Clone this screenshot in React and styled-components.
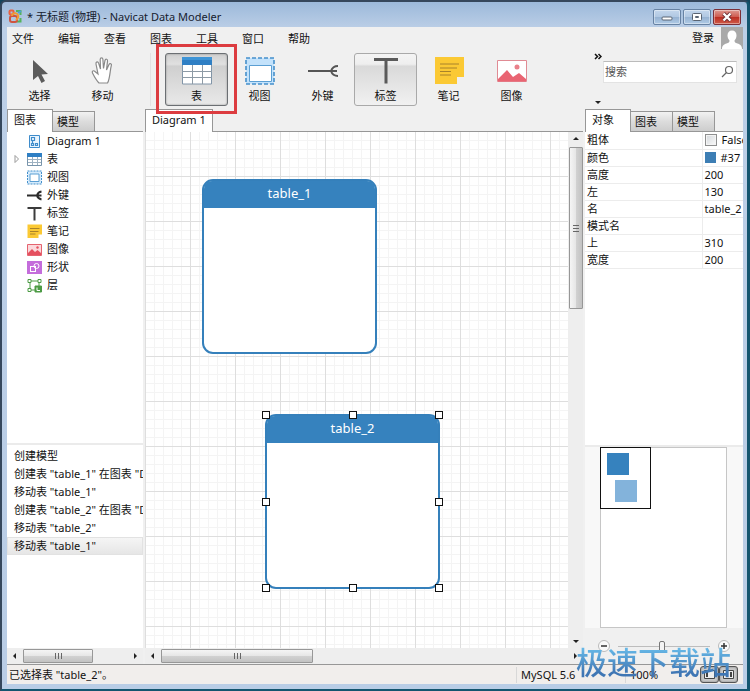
import React, { useState } from 'react';
import styled, { createGlobalStyle, css } from 'styled-components';

const GlobalStyle = createGlobalStyle`
  * {
    box-sizing: border-box;
  }

  body {
    margin: 0;
    background: #12455e;
  }

  body, button, input, table {
    font-family: 'Noto Sans', 'Noto Sans CJK SC', sans-serif;
    font-size: 11px;
    line-height: 16px;
    color: #111;
  }

  button {
    padding: 0;
    border: 0;
    background: none;
  }
`;

const Frame = styled.div`
  display: flex;
  flex-direction: column;
  min-height: 100vh;
  padding: 0 4px 5px 5px;
  border: 2px solid #35475c;
  border-right: 3px solid #14556f;
  border-bottom-color: #14556f;
  border-radius: 6px 6px 0 0;
  background: linear-gradient(#9cb9da, #bccfe7 27px, #b9cde6);
`;

const TitleBar = styled.header`
  display: flex;
  align-items: center;
  gap: 4px;
  height: 25px;
  padding: 4px 2px 0 1px;
`;

const Title = styled.h1`
  flex: 1;
  margin: 0;
  font-size: 11px;
  font-weight: 400;
  color: #16202e;
`;

const WindowButtons = styled.div`
  display: flex;
  gap: 2px;
`;

const WindowButton = styled.button`
  display: flex;
  align-items: center;
  justify-content: center;
  width: 28px;
  height: 16px;
  border: 1px solid ${({ $danger }) => ($danger ? '#7c2f38' : '#6782a3')};
  border-radius: 2px;
  box-shadow: inset 0 0 0 1px rgba(255, 255, 255, 0.4);
  background: ${({ $danger }) =>
    $danger
      ? 'linear-gradient(#dd9a92, #cf5c50 48%, #bb2c20 50%, #cf5a48)'
      : 'linear-gradient(#c3d6ec, #b1c8e2 48%, #95b1d1 50%, #b0cbe6)'};
`;

const Client = styled.div`
  flex: 1;
  display: flex;
  flex-direction: column;
  background: #f0f0f0;
`;

const MenuBar = styled.nav`
  display: flex;
  align-items: flex-start;
  height: 25px;
  padding-left: 5px;
`;

const MenuItem = styled.button`
  width: 46px;
  height: 24px;
  text-align: left;
`;

const Login = styled.button`
  display: flex;
  align-items: center;
  gap: 7px;
  margin-left: auto;
`;

const Toolbar = styled.div`
  display: flex;
  height: 57px;
  padding: 1px 6px 3px 1px;
`;

const ToolSeparator = styled.div`
  width: 1px;
  margin: 0 14px 0 16px;
  background: #e2e2e2;
`;

const ToolButton = styled.button`
  position: relative;
  display: flex;
  flex-direction: column;
  align-items: center;
  justify-content: space-between;
  width: 63px;
  height: 53px;
  padding: 2px 0 1px;
  border: 1px solid transparent;
  border-radius: 3px;

  ${({ $state }) =>
    $state === 'hover' &&
    css`
      border-color: #a9a9a9;
      background: linear-gradient(#f4f4f4, #eee 20%, #d9d9d9 24%, #f1f1f1);
    `}

  ${({ $state }) =>
    $state === 'pressed' &&
    css`
      border-color: #6b6f73;
      background: linear-gradient(#d0d0d0, #e0e0e0 20%, #cfcfcf 24%, #e9e9e9);
      box-shadow: inset 0 0 2px #888;
    `}
`;

const Highlight = styled.span`
  position: absolute;
  inset: -10px -10px -9px;
  border: 3px solid #dc3c40;
  pointer-events: none;
`;

const Overflow = styled.div`
  display: flex;
  flex-direction: column;
  justify-content: space-between;
  align-items: center;
  width: 10px;
  margin-left: auto;
`;

const SearchBox = styled.label`
  display: flex;
  align-items: center;
  width: 134px;
  height: 22px;
  margin-top: 8px;
  padding: 0 1px;
  border: 1px solid #e3e3e3;
  border-top-color: #bbb;
  background: #fff;
`;

const SearchInput = styled.input`
  flex: 1;
  min-width: 0;
  padding: 0;
  border: 0;
  outline: 0;
  background: none;

  &::placeholder {
    color: #555;
    opacity: 1;
  }
`;

const Workspace = styled.main`
  flex: 1;
  display: flex;
  gap: 2px;
`;

const Column = styled.section`
  display: flex;
  flex-direction: column;
  min-width: 0;
  flex: ${({ $width }) => ($width ? `0 0 ${$width}px` : '1')};
`;

const TabRow = styled.div`
  display: flex;
  align-items: flex-end;
  height: 23px;
  border-bottom: 1px solid #979797;
`;

const Tab = styled.button`
  min-width: 42px;
  height: 20px;
  padding: 0 4px;
  border: 1px solid #979797;
  border-left-width: 0;
  border-bottom: 0;
  background: linear-gradient(#f2f2f2, #dcdcdc 50%, #cdcdcd);
  text-align: left;

  ${({ $active }) =>
    $active &&
    css`
      min-width: 46px;
      height: 23px;
      margin-bottom: -1px;
      padding: 0 6px 2px;
      border-left-width: 1px;
      background: #fff;
    `}
`;

const Tree = styled.ul`
  flex: 1;
  margin: 0;
  padding: 0;
  list-style: none;
  background: #fff;
`;

const TreeItem = styled.li`
  display: grid;
  grid-template-columns: 11px 15px 1fr;
  align-items: center;
  column-gap: 5px;
  height: 18px;
  padding-left: 4px;
  white-space: nowrap;
`;

const History = styled.ol`
  height: 205px;
  margin: 0;
  padding: 2px 0 0;
  border-top: 2px solid #ebebeb;
  list-style: none;
  background: #fff;
`;

const HistoryItem = styled.li`
  height: 18px;
  padding: 0 0 0 7px;
  overflow: hidden;
  white-space: nowrap;
  line-height: 18px;
  background: ${({ $selected }) =>
    $selected ? 'linear-gradient(#f6f6f6, #e5e5e5)' : 'none'};
  box-shadow: ${({ $selected }) => ($selected ? 'inset 0 0 0 1px #e2e2e2' : 'none')};
`;

const ScrollTrack = styled.div`
  display: flex;
  flex-direction: ${({ $vertical }) => ($vertical ? 'column' : 'row')};
  align-items: center;
  justify-content: space-between;
  width: ${({ $vertical }) => ($vertical ? '15px' : 'auto')};
  height: ${({ $vertical }) => ($vertical ? 'auto' : '16px')};
  padding: ${({ $vertical }) => ($vertical ? '3px 0' : '1px 4px')};
  background: #eee;
`;

const ScrollThumb = styled.div`
  display: flex;
  align-items: center;
  justify-content: center;
  width: ${({ $vertical, $size }) => ($vertical ? '14px' : `${$size}px`)};
  height: ${({ $vertical, $size }) => ($vertical ? `${$size}px` : '14px')};
  margin: ${({ $vertical }) => ($vertical ? '4px 0 auto' : '0 auto 0 4px')};
  border: 1px solid #979797;
  border-radius: 1px;
  background: linear-gradient(
    ${({ $vertical }) => ($vertical ? '90deg' : '180deg')},
    #f5f5f5,
    #e6e6e6 48%,
    #d2d2d2 50%,
    #c2c2c2
  );
`;

const Canvas = styled.div`
  position: relative;
  flex: 1;
  overflow: hidden;
  background-color: #fff;
  background-image:
    linear-gradient(90deg, #dedede 1px, transparent 1px),
    linear-gradient(#dedede 1px, transparent 1px),
    linear-gradient(90deg, #f4f4f4 1px, transparent 1px),
    linear-gradient(#f4f4f4 1px, transparent 1px);
  background-size: 45px 45px, 45px 45px, 9px 9px, 9px 9px;
  background-position: 0 -1px;
`;

const CanvasRow = styled.div`
  flex: 1;
  display: flex;
`;

const Entity = styled.div`
  position: absolute;
  width: 175px;
  height: 175px;
  border: 2px solid #3580bb;
  border-radius: 11px;
  background: #fff;
`;

const EntityHeader = styled.div`
  height: 27px;
  border-radius: 8px 8px 0 0;
  background: #3682be;
  color: #fff;
  font-size: 13px;
  line-height: 25px;
  text-align: center;
`;

const Selection = styled.div`
  position: absolute;
  inset: -1px;
`;

const Handle = styled.span`
  position: absolute;
  width: 8px;
  height: 8px;
  margin: -4px;
  border: 1px solid #111;
  background: #fff;
`;

const PropertyPane = styled.div`
  flex: 1;
  background: #fff;
`;

const Properties = styled.table`
  width: 100%;
  table-layout: fixed;
  border-collapse: collapse;

  th, td {
    height: 17px;
    padding: 0 0 0 2px;
    overflow: hidden;
    border-bottom: 1px solid #ececec;
    font-weight: 400;
    text-align: left;
    white-space: nowrap;
  }

  td {
    border-left: 1px solid #ececec;
  }
`;

const PropertyValue = styled.div`
  display: flex;
  align-items: center;
  gap: 5px;
`;

const CheckBox = styled.input`
  flex: none;
  appearance: none;
  width: 12px;
  height: 12px;
  margin: 0;
  border: 1px solid #8e8f8f;
  background: linear-gradient(135deg, #d4d8dc, #fafafa);
  box-shadow: inset 0 0 0 1px #f4f4f4;
`;

const Swatch = styled.span`
  width: 11px;
  height: 11px;
  background: #3d7eb4;
`;

const Overview = styled.div`
  height: 183px;
  padding: 0 16px 0 15px;
  border-top: 2px solid #ebebeb;
  background: #f8f8f8;
`;

const OverviewPage = styled.div`
  position: relative;
  height: 181px;
  border: 1px solid #c6c6c6;
  background: #fff;
`;

const Viewport = styled.div`
  position: absolute;
  top: -1px;
  left: -1px;
  width: 51px;
  height: 62px;
  border: 1px solid #111;
`;

const MiniEntity = styled.span`
  position: absolute;
  width: 22px;
  height: 22px;
  background: ${({ $faded }) => ($faded ? '#83b3db' : '#3682be')};
`;

const ZoomBar = styled.div`
  flex: none;
  display: flex;
  align-items: center;
  gap: 8px;
  height: 36px;
  padding: 0 13px;
`;

const ZoomButton = styled.button`
  display: flex;
  width: 12px;
  height: 12px;
`;

const ZoomSlider = styled.input`
  flex: 1;
  min-width: 0;
  height: 12px;
  margin: 0;
  appearance: none;
  background: linear-gradient(#bdbdbd, #bdbdbd) center / 100% 1px no-repeat;

  &::-webkit-slider-thumb {
    appearance: none;
    width: 6px;
    height: 11px;
    border: 1px solid #777;
    border-radius: 2px;
    background: #f4f4f4;
  }
`;

const StatusBar = styled.footer`
  position: relative;
  display: flex;
  align-items: center;
  height: 20px;
  padding-right: 5px;
  border-top: 1px solid #979797;
  background: #f1eeec;
`;

const StatusText = styled.span`
  flex: ${({ $width }) => ($width ? `0 0 ${$width}px` : '1')};
  padding-left: ${({ $width }) => ($width ? '4px' : '2px')};
  border-left: ${({ $width }) => ($width ? '1px solid #d8d8d8' : '0')};
  white-space: nowrap;
`;

const PaneToggle = styled.button`
  display: flex;
  align-items: center;
  justify-content: center;
  width: 19px;
  height: 17px;
  border: 1px solid #555;
  border-radius: 3px;
  background: #c9c9c9;
  box-shadow: inset 0 0 2px #777;
`;

const Watermark = styled.span`
  position: absolute;
  right: 12px;
  bottom: 3px;
  background: linear-gradient(#66b7e6 20%, #3f76b4 80%);
  background-clip: text;
  color: transparent;
  font-family: 'Noto Sans CJK SC', sans-serif;
  font-size: 31px;
  font-weight: 500;
  line-height: 40px;
  white-space: nowrap;
  pointer-events: none;
`;

const AppIcon = () => (
  <svg width="15" height="15" viewBox="0 0 15 15" fill="none" strokeWidth="2">
    <rect x="1.5" y="1.5" width="4" height="4" rx="1" stroke="#e9603f" />
    <path d="M8 2h4.5v4M12.5 9v3.5h-4" stroke="#54b35d" />
    <rect x="2" y="7" width="7" height="6" rx="2" stroke="#cf5440" />
    <path d="M4 7c0-3 5-4 6-1s-1 4-2 5" stroke="#ef9b35" />
    <path d="M10 4l3-2" stroke="#4b9ddb" />
  </svg>
);

const Arrow = ({ dir }) => {
  const paths = {
    left: 'M5 1v6L2 4z',
    right: 'M3 1v6l3-3z',
    up: 'M1 5h6L4 2z',
    down: 'M1 3h6L4 6z',
  };
  return (
    <svg width="8" height="8" viewBox="0 0 8 8">
      <path d={paths[dir]} fill="#222" />
    </svg>
  );
};

const Grip = ({ vertical }) => (
  <svg width="8" height="8" viewBox="0 0 8 8" stroke="#666">
    <path d={vertical ? 'M1 1.5h6M1 4.5h6M1 7.5h6' : 'M1.5 1v6M4.5 1v6M7.5 1v6'} />
  </svg>
);

const TableIcon = ({ size }) =>
  size < 20 ? (
    <svg width={size} height={size} viewBox="0 0 15 15">
      <path d="M.5 1.500h14v12H.5z" fill="#fff" stroke="#7894ab" />
      <path d="M0 1h15v4H0z" fill="#2f7fc4" />
      <path d="M5.500 5v8M10.500 5v8M1 7.500h13M1 10.500h13" stroke="#9db1c1" />
    </svg>
  ) : (
    <svg width={size} height={size} viewBox="0 0 30 30">
      <path d="M.5 2h29v26H.5z" fill="#fff" stroke="#8195a8" />
      <path d="M0 1h30v8H0z" fill="#2f7fc4" />
      <path d="M0 1h30v3H0z" fill="#3e94d6" />
      <path d="M10.500 9v19M20.500 9v19M0 15.500h30M0 21.500h30" stroke="#8d9aa5" />
    </svg>
  );

const ViewIcon = ({ size }) =>
  size < 20 ? (
    <svg width={size} height={size} viewBox="0 0 15 15">
      <path d="M.5 1h14v13H.5z" fill="#d5ebfc" stroke="#4590cb" strokeDasharray="2 1" />
      <path d="M3 4h9v7.500H3z" fill="#fff" stroke="#5b9fd3" />
    </svg>
  ) : (
    <svg width={size} height={size} viewBox="0 0 30 30">
      <path d="M1 2h28v26H1z" fill="#c3e2fb" stroke="#4590cb" strokeWidth="1.600" strokeDasharray="4 2" />
      <path d="M4.500 9.500h22v16h-22z" fill="#fff" stroke="#5b9fd3" />
    </svg>
  );

const KeyIcon = ({ size }) => (
  <svg
    width={size}
    height={size}
    viewBox="0 0 30 30"
    fill="none"
    stroke={size < 20 ? '#2c2c2c' : '#555'}
    strokeWidth={size < 20 ? 4 : 2}
  >
    <path d={size < 20 ? 'M0 15h29M29 7c-5 1-8 4-9 8 1 4 4 7 9 8' : 'M0 15h29M30 10c-4 0-6 2-7 5 1 3 3 5 7 5'} />
  </svg>
);

const LabelIcon = ({ size }) => (
  <svg
    width={size}
    height={size}
    viewBox="0 0 30 30"
    fill="none"
    stroke={size < 20 ? '#3c3c3c' : '#5a5a5a'}
    strokeWidth={size < 20 ? 4 : 3}
  >
    <path d={size < 20 ? 'M1 4h28M15 4v25' : 'M3 3.500h24M15 3.500v24'} />
  </svg>
);

const NoteIcon = ({ size }) => (
  <svg width={size} height={size} viewBox="0 0 30 30">
    <path d="M1 1h29v20h-7v7H1z" fill="#fbc934" />
    <path
      d={size < 20 ? 'M6 9h19M6 15h17M6 20h11' : 'M6 8h19M6 12h17M6 15.500h11M6 19h11'}
      stroke="#a8822a"
      strokeWidth={size < 20 ? 2 : 1}
    />
  </svg>
);

const ImageIcon = ({ size }) =>
  size < 20 ? (
    <svg width={size} height={size} viewBox="0 0 15 15">
      <path d="M.5 2.500h14v11H.5z" fill="#fbd9dc" stroke="#e5636f" />
      <path d="M1 11l4-4 3 3 2.500-2L14 11v2H1z" fill="#e5505f" />
      <circle cx="10.500" cy="5.500" r="1.200" fill="#e5505f" />
    </svg>
  ) : (
    <svg width={size} height={size} viewBox="0 0 30 30">
      <path d="M.5 4.500h29v21H.5z" fill="#fff" stroke="#e08b94" />
      <path d="M1 23l9-9 6 7 6-4 7 6v2.500H1z" fill="#e96472" />
      <circle cx="20" cy="11" r="2.500" fill="#e9808a" />
    </svg>
  );

const PointerIcon = () => (
  <svg width="30" height="30" viewBox="0 0 30 30">
    <path d="M8 4v20l5-4 3.500 7 3.500-2-3.500-6.500 6.500-.5z" fill="#5c5c5c" />
  </svg>
);

const HandIcon = () => (
  <svg width="30" height="30" viewBox="0 0 30 30" fill="#fff" stroke="#8a8a8a" strokeWidth="1.200">
    <path d="M11 27C8 24 6 20 4.500 17c-1-2 1-3 2.500-1.500L10 18 8 8c-.4-2.500 2-3 2.600-.8L12.500 13l-.3-9.500c0-2.200 2.600-2.200 2.700 0l.6 9 1.500-8c.5-2 2.800-1.500 2.500.6L18.500 14l2.500-5.500c1-1.800 3-.6 2.300 1.200C22 14 22 23 19.500 27z" />
  </svg>
);

const DiagramIcon = ({ size }) => (
  <svg width={size} height={size} viewBox="0 0 15 15" fill="none" stroke="#3f8ccb">
    <path d="M2.500 1.500h10v12h-10z" fill="#eaf5fe" />
    <path d="M4.500 3.500h3v3h-3zM4.500 9.500h2v2h-2zM8.500 9.500h2v2h-2zM5.500 6.500v3" strokeWidth="1.200" />
  </svg>
);

const ShapeIcon = ({ size }) => (
  <svg width={size} height={size} viewBox="0 0 15 15" fill="none" stroke="#fff">
    <path d="M0 1h15v13H0z" fill="#c46ddb" stroke="none" />
    <rect x="3.500" y="6.500" width="5" height="5" />
    <circle cx="9.500" cy="6" r="2.500" />
  </svg>
);

const LayerIcon = ({ size }) => (
  <svg width={size} height={size} viewBox="0 0 15 15" fill="#fff" stroke="#4c9b45">
    <path d="M3 3h9v9H3z" fill="none" />
    <path d="M1 1.500h3v3H1zM11 1.500h3v3h-3zM1 10.500h3v3H1z" />
    <path d="M8 8h6.500v6H8z" fill="#4c9b45" />
    <path d="M10 9.500v3h3" fill="none" stroke="#fff" />
  </svg>
);

const Avatar = () => (
  <svg width="22" height="22" viewBox="0 0 22 22">
    <path d="M0 0h22v22H0z" fill="#a9a9a9" />
    <path d="M11 3.500c-3 0-4.500 2-4.500 5 0 2 1 4 2 5 0 2-.8 2.300-3 3C3 17.300 1 18.500 1 22h20c0-3.500-2-4.700-4.500-5.500-2.200-.7-3-1-3-3 1-1 2-3 2-5 0-3-1.500-5-4.500-5z" fill="#fff" />
  </svg>
);

const MENUS = ['文件', '编辑', '查看', '图表', '工具', '窗口', '帮助'];

const MODES = [
  { label: '选择', Icon: PointerIcon },
  { label: '移动', Icon: HandIcon },
];

const TOOLS = [
  { label: '表', Icon: TableIcon, state: 'pressed' },
  { label: '视图', Icon: ViewIcon },
  { label: '外键', Icon: KeyIcon },
  { label: '标签', Icon: LabelIcon, state: 'hover' },
  { label: '笔记', Icon: NoteIcon },
  { label: '图像', Icon: ImageIcon },
];

const TREE = [
  { label: 'Diagram 1', Icon: DiagramIcon },
  { label: '表', Icon: TableIcon, expandable: true },
  { label: '视图', Icon: ViewIcon },
  { label: '外键', Icon: KeyIcon },
  { label: '标签', Icon: LabelIcon },
  { label: '笔记', Icon: NoteIcon },
  { label: '图像', Icon: ImageIcon },
  { label: '形状', Icon: ShapeIcon },
  { label: '层', Icon: LayerIcon },
];

const HISTORY = [
  '创建模型',
  '创建表 "table_1" 在图表 "Diagram 1"',
  '移动表 "table_1"',
  '创建表 "table_2" 在图表 "Diagram 1"',
  '移动表 "table_2"',
  '移动表 "table_1"',
];

const ENTITIES = [
  { name: 'table_1', left: 57, top: 47 },
  { name: 'table_2', left: 120, top: 282, selected: true },
];

const HANDLES = [
  [0, 0], [50, 0], [100, 0], [0, 50], [100, 50], [0, 100], [50, 100], [100, 100],
];

const PROPERTIES = [
  ['高度', '200'],
  ['左', '130'],
  ['名', 'table_2'],
  ['模式名', ''],
  ['上', '310'],
  ['宽度', '200'],
];

const Tabs = ({ items }) => (
  <TabRow role="tablist">
    {items.map((item, i) => (
      <Tab key={item} role="tab" aria-selected={i === 0} $active={i === 0}>
        {item}
      </Tab>
    ))}
  </TabRow>
);

const Scrollbar = ({ vertical, size }) => (
  <ScrollTrack $vertical={vertical}>
    <Arrow dir={vertical ? 'up' : 'left'} />
    <ScrollThumb $vertical={vertical} $size={size}>
      <Grip vertical={vertical} />
    </ScrollThumb>
    <Arrow dir={vertical ? 'down' : 'right'} />
  </ScrollTrack>
);

const App = () => {
  const [zoom, setZoom] = useState(48);
  const [bold, setBold] = useState(false);

  return (
    <>
      <GlobalStyle />
      <Frame>
        <TitleBar>
          <AppIcon />
          <Title>* 无标题 (物理) - Navicat Data Modeler</Title>
          <WindowButtons>
            <WindowButton aria-label="最小化">
              <svg width="12" height="8" viewBox="0 0 12 8">
                <rect x="1" y="4" width="10" height="3" rx="1" fill="#fff" stroke="#5a6472" />
              </svg>
            </WindowButton>
            <WindowButton aria-label="最大化">
              <svg width="12" height="10" viewBox="0 0 12 10" fill="#fff" stroke="#5a6472">
                <rect x="1.500" y="1.500" width="9" height="7" rx="1" />
                <path d="M4.500 4.500h3v1h-3z" />
              </svg>
            </WindowButton>
            <WindowButton aria-label="关闭" $danger>
              <svg width="12" height="10" viewBox="0 0 12 10">
                <path d="M2.500 1.500l7 7M9.500 1.500l-7 7" stroke="#6b3035" strokeWidth="4" />
                <path d="M2.500 1.500l7 7M9.500 1.500l-7 7" stroke="#fff" strokeWidth="2.400" />
              </svg>
            </WindowButton>
          </WindowButtons>
        </TitleBar>
        <Client>
          <MenuBar>
            {MENUS.map((menu) => (
              <MenuItem key={menu}>{menu}</MenuItem>
            ))}
            <Login>
              登录
              <Avatar />
            </Login>
          </MenuBar>
          <Toolbar>
            {MODES.map(({ label, Icon }) => (
              <ToolButton key={label}>
                <Icon />
                {label}
              </ToolButton>
            ))}
            <ToolSeparator />
            {TOOLS.map(({ label, Icon, state }) => (
              <ToolButton key={label} $state={state}>
                <Icon size={30} />
                {label}
                {state === 'pressed' && <Highlight />}
              </ToolButton>
            ))}
            <Overflow>
              <svg width="8" height="8" viewBox="0 0 8 8" fill="none" stroke="#111" strokeWidth="1.500">
                <path d="M1 1l2.500 2.500L1 6M4.500 1L7 3.500 4.500 6" />
              </svg>
              <Arrow dir="down" />
            </Overflow>
            <SearchBox>
              <SearchInput type="text" placeholder="搜索" aria-label="搜索" />
              <svg width="14" height="14" viewBox="0 0 14 14" fill="none" stroke="#666" strokeWidth="1.200">
                <circle cx="8" cy="5" r="3.500" />
                <path d="M5.500 7.500L1 12" />
              </svg>
            </SearchBox>
          </Toolbar>
          <Workspace>
            <Column $width={136}>
              <Tabs items={['图表', '模型']} />
              <Tree>
                {TREE.map(({ label, Icon, expandable }) => (
                  <TreeItem key={label}>
                    <svg width="11" height="10" viewBox="0 0 11 10" fill="none" stroke="#999">
                      {expandable && <path d="M4 1.500l3.500 3.500L4 8.500z" />}
                    </svg>
                    <Icon size={15} />
                    <span>{label}</span>
                  </TreeItem>
                ))}
              </Tree>
              <History>
                {HISTORY.map((entry, i) => (
                  <HistoryItem key={i} $selected={i === HISTORY.length - 1}>
                    {entry}
                  </HistoryItem>
                ))}
              </History>
              <Scrollbar size={70} />
            </Column>
            <Column>
              <Tabs items={['Diagram 1']} />
              <CanvasRow>
                <Canvas>
                  {ENTITIES.map(({ name, left, top, selected }) => (
                    <Entity key={name} style={{ left, top }}>
                      <EntityHeader>{name}</EntityHeader>
                      {selected && (
                        <Selection>
                          {HANDLES.map(([x, y]) => (
                            <Handle key={`${x}-${y}`} style={{ left: `${x}%`, top: `${y}%` }} />
                          ))}
                        </Selection>
                      )}
                    </Entity>
                  ))}
                </Canvas>
                <Scrollbar vertical size={162} />
              </CanvasRow>
              <Scrollbar size={152} />
            </Column>
            <Column $width={158}>
              <Tabs items={['对象', '图表', '模型']} />
              <PropertyPane>
                <Properties>
                  <colgroup>
                    <col width="117" />
                    <col />
                  </colgroup>
                  <tbody>
                    <tr>
                      <th scope="row"><label htmlFor="bold">粗体</label></th>
                      <td>
                        <PropertyValue>
                          <CheckBox
                            id="bold"
                            type="checkbox"
                            checked={bold}
                            onChange={(e) => setBold(e.target.checked)}
                          />
                          {bold ? 'True' : 'False'}
                        </PropertyValue>
                      </td>
                    </tr>
                    <tr>
                      <th scope="row">颜色</th>
                      <td>
                        <PropertyValue>
                          <Swatch />
                          #37
                        </PropertyValue>
                      </td>
                    </tr>
                    {PROPERTIES.map(([label, value]) => (
                      <tr key={label}>
                        <th scope="row">{label}</th>
                        <td>{value}</td>
                      </tr>
                    ))}
                  </tbody>
                </Properties>
              </PropertyPane>
              <Overview>
                <OverviewPage>
                  <Viewport>
                    <MiniEntity style={{ left: 6, top: 5 }} />
                    <MiniEntity $faded style={{ left: 14, top: 32 }} />
                  </Viewport>
                </OverviewPage>
              </Overview>
              <ZoomBar>
                <ZoomButton aria-label="缩小">
                  <svg width="12" height="12" viewBox="0 0 12 12" fill="#fafafa" stroke="#bbb">
                    <circle cx="6" cy="6" r="5.500" />
                    <path d="M3 6h6" stroke="#333" strokeWidth="1.500" />
                  </svg>
                </ZoomButton>
                <ZoomSlider
                  type="range"
                  aria-label="缩放"
                  value={zoom}
                  onChange={(e) => setZoom(Number(e.target.value))}
                />
                <ZoomButton aria-label="放大">
                  <svg width="12" height="12" viewBox="0 0 12 12" fill="#fafafa" stroke="#bbb">
                    <circle cx="6" cy="6" r="5.500" />
                    <path d="M3 6h6M6 3v6" stroke="#333" strokeWidth="1.500" />
                  </svg>
                </ZoomButton>
              </ZoomBar>
            </Column>
          </Workspace>
          <StatusBar>
            <StatusText>已选择表 "table_2"。</StatusText>
            <StatusText $width={109}>MySQL 5.6</StatusText>
            <StatusText $width={75}>100%</StatusText>
            <PaneToggle aria-label="左侧窗格">
              <svg width="11" height="11" viewBox="0 0 11 11" fill="#eee" stroke="#444">
                <path d="M.5 1.500h10v8H.5z" />
                <path d="M3 3v5" strokeWidth="2" />
              </svg>
            </PaneToggle>
            <PaneToggle aria-label="右侧窗格">
              <svg width="11" height="11" viewBox="0 0 11 11" fill="#eee" stroke="#444">
                <path d="M.5 1.500h10v8H.5z" />
                <path d="M8 3v5" strokeWidth="2" />
              </svg>
            </PaneToggle>
            <Watermark>极速下载站</Watermark>
          </StatusBar>
        </Client>
      </Frame>
    </>
  );
};

export default App;
